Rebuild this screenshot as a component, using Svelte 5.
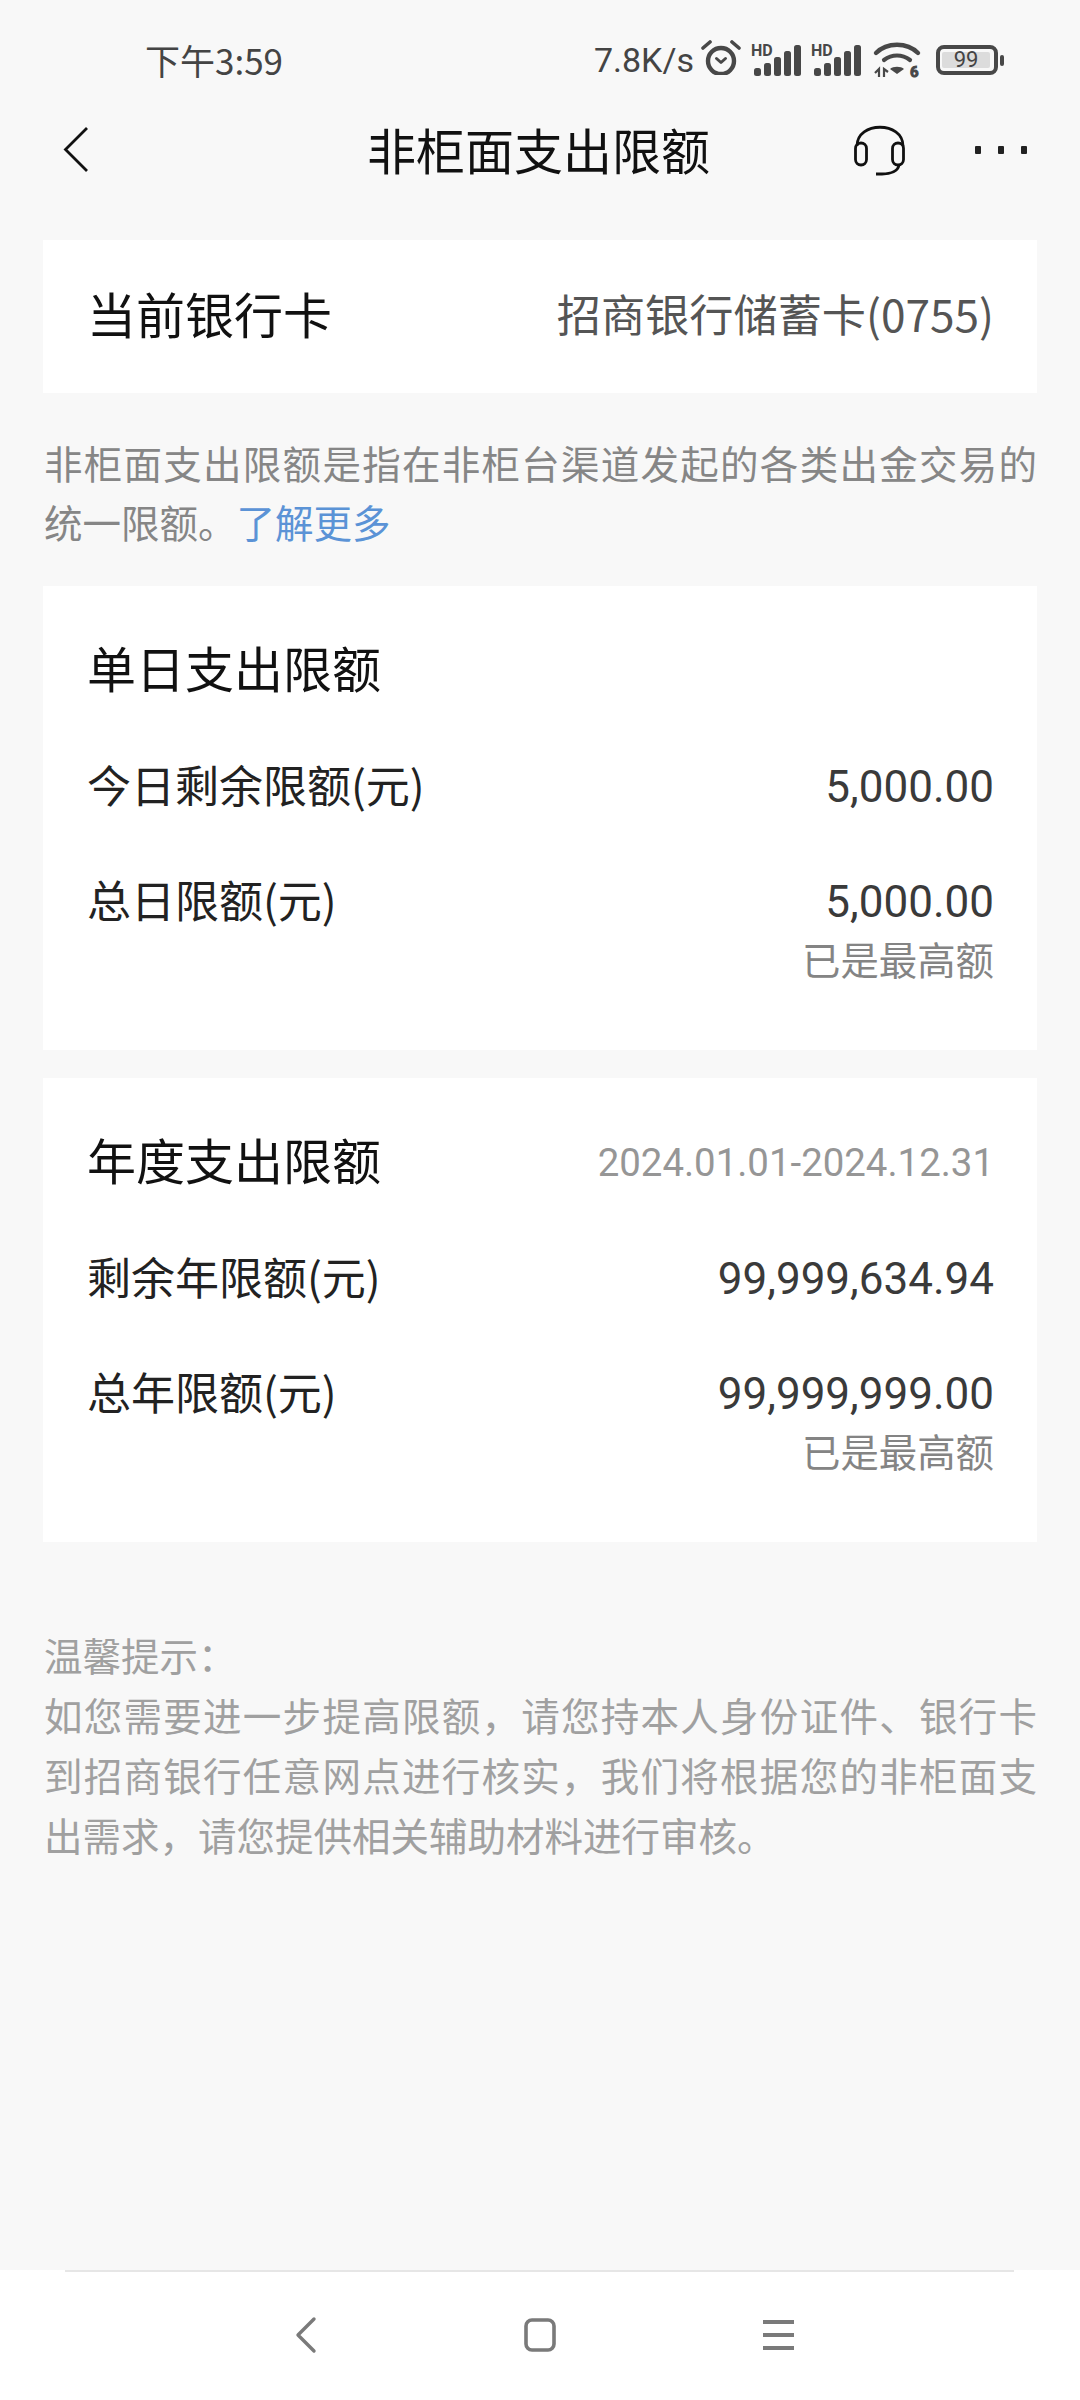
<script>
	const sections = [
		{
			title: '单日支出限额',
			period: '',
			rows: [
				{ label: '今日剩余限额(元)', value: '5,000.00' },
				{ label: '总日限额(元)', value: '5,000.00', note: '已是最高额' }
			]
		},
		{
			title: '年度支出限额',
			period: '2024.01.01-2024.12.31',
			rows: [
				{ label: '剩余年限额(元)', value: '99,999,634.94' },
				{ label: '总年限额(元)', value: '99,999,999.00', note: '已是最高额' }
			]
		}
	];
	// x and height of the five signal bars
	const signalBars = [
		[3, 8],
		[13, 13],
		[23, 19],
		[33, 25],
		[43, 31]
	];
</script>

{#snippet signal()}
	<svg class="signal" width="50" height="32" viewBox="0 0 50 32">
		<text x="0" y="12" class="hd">HD</text>
		{#each signalBars as [x, h]}
			<rect {x} y={32 - h} width="7" height={h} rx="2.5" />
		{/each}
	</svg>
{/snippet}

<div class="page">
	<div class="statusbar">
		<span class="time">下午3:59</span>
		<div class="status-right">
			<span class="speed">7.8K/s</span>
			<svg class="alarm" width="40" height="36" viewBox="0 0 40 36" fill="none" stroke="#484848">
				<circle cx="20" cy="22" r="13" stroke-width="4.4" />
				<path d="M15.5 19.5l4.5 4 4.5-4" stroke-width="3" stroke-linecap="round" stroke-linejoin="round" />
				<path d="M2 9l7-6M38 9l-7-6" stroke-width="3.6" stroke-linecap="round" />
			</svg>
			{@render signal()}
			{@render signal()}
			<svg class="wifi" width="46" height="36" viewBox="0 0 46 36" fill="none" stroke="#484848">
				<path d="M2 11C13 0 33 0 44 11" stroke-width="4.4" stroke-linecap="round" />
				<path d="M10 18c8-6 18-6 26 0" stroke-width="4.2" stroke-linecap="round" />
				<path d="M16 27l7 5 7-5c-3-3-11-3-14 0z" fill="#484848" stroke="none" />
				<path d="M1 31l4-4v8M10 35v-8l4 3" stroke-width="2.2" />
				<text x="36" y="35" class="wifi-six">6</text>
			</svg>
			<div class="battery">
				<div class="battery-body"><span class="battery-fill">99</span></div>
				<div class="battery-tip"></div>
			</div>
		</div>
	</div>

	<header class="topbar">
		<svg class="back" width="26" height="48" viewBox="0 0 26 48" fill="none" stroke="#111" stroke-width="2.8">
			<path d="M24 2L2.5 23.5 24 45" />
		</svg>
		<h1>非柜面支出限额</h1>
		<svg class="headset" width="54" height="52" viewBox="0 0 54 52" fill="none" stroke="#111" stroke-width="2.8">
			<path d="M4 22C4 -3 50 -3 50 22" />
			<rect x="2.5" y="19" width="11" height="22" rx="5.5" />
			<rect x="39.5" y="19" width="11" height="22" rx="5.5" />
			<path d="M46 41c-1 6-8 9-17 9h-6" />
		</svg>
		<div class="more">
			<i></i><i></i><i></i>
		</div>
	</header>

	<main>
		<section class="card card-current">
			<span class="big">当前银行卡</span>
			<span class="bank">招商银行储蓄卡(0755)</span>
		</section>

		<p class="intro">非柜面支出限额是指在非柜台渠道发起的各类出金交易的统一限额。<span class="link">了解更多</span></p>

		{#each sections as section}
			<section class="card card-limit">
				<div class="limit-head">
					<span class="big">{section.title}</span>
					{#if section.period}<span class="period">{section.period}</span>{/if}
				</div>
				{#each section.rows as row}
					<div class="row">
						<span class="label">{row.label}</span>
						<div class="amount">
							<span class="value">{row.value}</span>
							{#if row.note}<span class="note">{row.note}</span>{/if}
						</div>
					</div>
				{/each}
			</section>
		{/each}

		<p class="tips">温馨提示：<br />如您需要进一步提高限额，请您持本人身份证件、银行卡到招商银行任意网点进行核实，我们将根据您的非柜面支出需求，请您提供相关辅助材料进行审核。</p>
	</main>

	<nav class="navbar">
		<svg class="nav-back" width="22" height="38" viewBox="0 0 22 38" fill="none" stroke="#7a7a7a" stroke-width="3.4" stroke-linecap="round" stroke-linejoin="round">
			<path d="M19 3L3 19l16 16" />
		</svg>
		<svg class="nav-home" width="32" height="34" viewBox="0 0 32 34" fill="none" stroke="#7a7a7a" stroke-width="3.6">
			<rect x="2" y="2" width="28" height="30" rx="6" />
		</svg>
		<div class="menu">
			<i></i><i></i><i></i>
		</div>
	</nav>
</div>

<style>
	:global(body) {
		margin: 0;
		background: #f8f8f8;
	}

	.page {
		width: 1080px;
		height: 2400px;
		display: flex;
		flex-direction: column;
		background: #f8f8f8;
		font-family: 'Noto Sans CJK SC', 'Noto Sans', sans-serif;
		overflow: hidden;
	}

	.statusbar {
		height: 120px;
		box-sizing: border-box;
		padding: 36px 0 0 145px;
		display: flex;
		justify-content: space-between;
		align-items: flex-start;
		color: #444;
	}

	.time {
		font-size: 35px;
		line-height: 48px;
	}

	.status-right {
		display: flex;
		align-items: center;
		height: 48px;
		margin-right: 76px;
	}

	.speed {
		font-size: 34px;
		font-family: Roboto, sans-serif;
		margin-right: 7px;
	}

	.alarm { margin: -6px 10px 0 0; }

	.signal { margin-right: 10px; fill: #484848; overflow: visible; }

	.hd {
		font-family: Roboto, sans-serif;
		font-size: 16px;
		font-weight: 700;
		fill: #484848;
	}

	.wifi { margin: 0 16px 0 3px; overflow: visible; }

	.wifi-six {
		font-family: Roboto, sans-serif;
		font-size: 15px;
		font-weight: 700;
		fill: #484848;
	}

	.battery {
		display: flex;
		align-items: center;
		gap: 2px;
	}

	.battery-body {
		width: 62px;
		height: 30px;
		box-sizing: border-box;
		border: 4px solid #484848;
		border-radius: 8px;
		padding: 3px 4px 3px 2px;
		display: flex;
	}

	.battery-fill {
		flex: 1;
		background: #dcdcdc;
		border-radius: 2px;
		font-family: Roboto, sans-serif;
		font-size: 22px;
		line-height: 16px;
		text-align: center;
		color: #444;
	}

	.battery-tip {
		width: 4px;
		height: 11px;
		background: #484848;
		border-radius: 2px;
	}

	.topbar {
		height: 60px;
		display: flex;
		align-items: center;
	}

	.back { margin-left: 63px; }

	h1 {
		margin: -3px 0 0 278px;
		width: 343px;
		font-size: 49px;
		line-height: 60px;
		font-weight: 400;
		color: #111;
		white-space: nowrap;
	}

	.headset { margin-left: 143px; }

	.more {
		display: flex;
		gap: 17px;
		margin-left: 68px;
	}

	.more i {
		width: 6px;
		height: 8px;
		background: #222;
		border-radius: 1px;
	}

	main {
		flex: 1;
		padding: 60px 43px 0;
	}

	.card {
		background: #fff;
	}

	.big {
		font-size: 49px;
		color: #111;
	}

	.card-current {
		height: 153px;
		box-sizing: border-box;
		padding: 0 43px 8px 44px;
		display: flex;
		justify-content: space-between;
		align-items: center;
	}

	.bank {
		font-size: 44.2px;
		color: #555;
	}

	.intro {
		margin: 0;
		padding: 40px 0 0 1px;
		height: 193px;
		box-sizing: border-box;
		font-size: 38.5px;
		line-height: 59px;
		text-align: justify;
		color: #868686;
	}

	.link {
		color: #5b93d6;
	}

	.card-limit {
		height: 464px;
		box-sizing: border-box;
		padding: 45px 44px 0;
		margin-bottom: 28px;
	}

	.limit-head {
		display: flex;
		justify-content: space-between;
		align-items: center;
		height: 70px;
		margin-bottom: 56px;
	}

	.period {
		font-family: Roboto, sans-serif;
		font-size: 38.4px;
		color: #969696;
		margin: 8px -1px 0 0;
	}

	.row {
		display: flex;
		justify-content: space-between;
		align-items: flex-start;
		min-height: 115px;
	}

	.label {
		font-size: 44px;
		line-height: 56px;
		color: #222;
		margin-top: -1px;
	}

	.amount {
		display: flex;
		flex-direction: column;
		align-items: flex-end;
	}

	.value {
		font-family: Roboto, sans-serif;
		font-size: 44px;
		line-height: 56px;
		color: #3a3a3a;
		margin: 2px -1px 0 0;
	}

	.note {
		font-size: 38.4px;
		line-height: 56px;
		color: #848484;
		margin-right: -1px;
	}

	.tips {
		margin: 82px 0 0;
		padding-left: 1px;
		font-size: 38.5px;
		line-height: 60px;
		text-align: justify;
		color: #a0a0a0;
	}

	.navbar {
		height: 130px;
		background: #fff;
		position: relative;
		display: flex;
		align-items: center;
		box-sizing: border-box;
	}

	.navbar::before {
		content: '';
		position: absolute;
		top: 0;
		left: 65px;
		right: 66px;
		height: 2px;
		background: #e6e6e6;
	}

	.nav-back { margin-left: 295px; }

	.nav-home { margin-left: 207px; }

	.menu {
		display: flex;
		flex-direction: column;
		gap: 9px;
		margin-left: 207px;
	}

	.menu i {
		display: block;
		width: 31px;
		height: 4px;
		background: #7a7a7a;
	}
</style>
